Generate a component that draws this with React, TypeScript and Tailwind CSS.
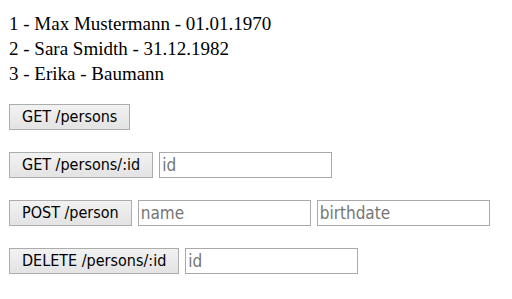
import React from "react";

const btn =
  "h-[26px] px-[12px] border border-[#adadad] bg-[linear-gradient(#f2f2f2,#e3e3e3)] text-[16px] text-black leading-none [font-family:'DejaVu_Sans_Condensed','DejaVu_Sans',sans-serif]";
const inp =
  "h-[26px] w-[173px] border border-[#a9a9a9] bg-white px-[2px] text-[17px] text-black placeholder:text-[#757575] outline-none [font-family:'DejaVu_Sans_Condensed','DejaVu_Sans',sans-serif]";

export default function App() {
  return (
    <div className="w-[512px] h-[299px] bg-white pl-[9px] pt-[11px]">
      <div className="text-[19px] leading-[25px] text-black [font-family:'Liberation_Serif',serif]">
        <div>1 - Max Mustermann - 01.01.1970</div>
        <div>2 - Sara Smidth - 31.12.1982</div>
        <div>3 - Erika - Baumann</div>
      </div>
      <div className="mt-[18px] flex flex-col gap-[22px]">
        <div className="flex gap-[6px]">
          <button className={btn}>GET /persons</button>
        </div>
        <div className="flex gap-[6px]">
          <button className={btn}>GET /persons/:id</button>
          <input className={inp} placeholder="id" />
        </div>
        <div className="flex gap-[6px]">
          <button className={btn}>POST /person</button>
          <input className={inp} placeholder="name" />
          <input className={inp} placeholder="birthdate" />
        </div>
        <div className="flex gap-[6px]">
          <button className={btn}>DELETE /persons/:id</button>
          <input className={inp} placeholder="id" />
        </div>
      </div>
    </div>
  );
}
